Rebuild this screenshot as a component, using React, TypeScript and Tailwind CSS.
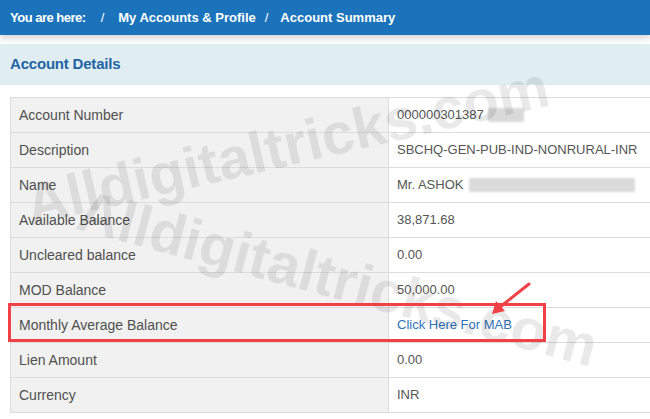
import { ReactNode } from 'react'

type Row = { label: string; value: ReactNode }

const rows: Row[] = [
  {
    label: 'Account Number',
    value: (
      <span className="flex items-center">
        000000301387
        <span className="ml-[4px] inline-block h-[14px] w-[36px] bg-[#d9d9d9] blur-[1px]" />
      </span>
    ),
  },
  { label: 'Description', value: 'SBCHQ-GEN-PUB-IND-NONRURAL-INR' },
  {
    label: 'Name',
    value: (
      <span className="flex items-center">
        Mr. ASHOK
        <span className="ml-[6px] inline-block h-[14px] w-[166px] bg-[#dadada] blur-[1px]" />
      </span>
    ),
  },
  { label: 'Available Balance', value: '38,871.68' },
  { label: 'Uncleared balance', value: '0.00' },
  { label: 'MOD Balance', value: '50,000.00' },
  {
    label: 'Monthly Average Balance',
    value: <a className="text-[#2f72b8] cursor-pointer">Click Here For MAB</a>,
  },
  { label: 'Lien Amount', value: '0.00' },
  { label: 'Currency', value: 'INR' },
]

export default function App() {
  return (
    <div className="relative w-[650px] h-[419px] overflow-hidden bg-white font-['Liberation_Sans',Arial,sans-serif]">
      {/* breadcrumb bar */}
      <div className="h-[35px] bg-[#1b74bb] shadow-[0_3px_7px_rgba(0,0,0,0.18)] flex items-center pl-[10px] text-white text-[13px] font-bold">
        <span className="tracking-[-0.5px]">You are here:</span>
        <span className="ml-[15px] mr-[14px] font-normal">/</span>
        <span>My Accounts &amp; Profile</span>
        <span className="ml-[9px] mr-[12px] font-normal">/</span>
        <span>Account Summary</span>
      </div>

      {/* section header */}
      <div className="mt-[9px] h-[41px] bg-[#e0eef3] flex items-center pl-[10px]">
        <h2 className="text-[15px] font-bold text-[#1f64a2] tracking-[-0.2px]">Account Details</h2>
      </div>

      {/* details table */}
      <div className="mt-[12px] ml-[10px] grid grid-cols-[378px_1fr] border-t border-l border-[#dcdcdc] text-[13px] text-[#555]">
        {rows.map(r => (
          <div key={r.label} className="contents">
            <div className="h-[35px] flex items-center pl-[8px] bg-[#f1f1f1] border-b border-r border-[#dcdcdc] text-[14px] text-[#4f4f4f]">
              {r.label}
            </div>
            <div className="h-[35px] flex items-center pl-[8px] border-b border-[#dcdcdc]">
              {r.value}
            </div>
          </div>
        ))}
      </div>

      {/* watermarks */}
      <span className="pointer-events-none absolute left-[287px] top-[145px] -translate-x-1/2 -translate-y-1/2 -rotate-[13deg] whitespace-nowrap text-[58px] font-black text-black/[0.085]">
        Alldigitaltricks.com
      </span>
      <span className="pointer-events-none absolute left-[338px] top-[278px] -translate-x-1/2 -translate-y-1/2 rotate-[15deg] whitespace-nowrap text-[58px] font-black text-black/[0.085]">
        Alldigitaltricks.com
      </span>

      {/* highlight box */}
      <div className="pointer-events-none absolute left-[8px] top-[303px] w-[538px] h-[39px] border-[3px] border-[#ef4146]" />

      {/* arrow */}
      <svg className="pointer-events-none absolute left-[484px] top-[278px]" width="52" height="44" viewBox="0 0 52 44">
        <line x1="45" y1="6" x2="16" y2="29" stroke="#ef4146" strokeWidth="3" strokeLinecap="round" />
        <polygon points="8,36 12,23 21,33" fill="#ef4146" />
      </svg>
    </div>
  )
}
